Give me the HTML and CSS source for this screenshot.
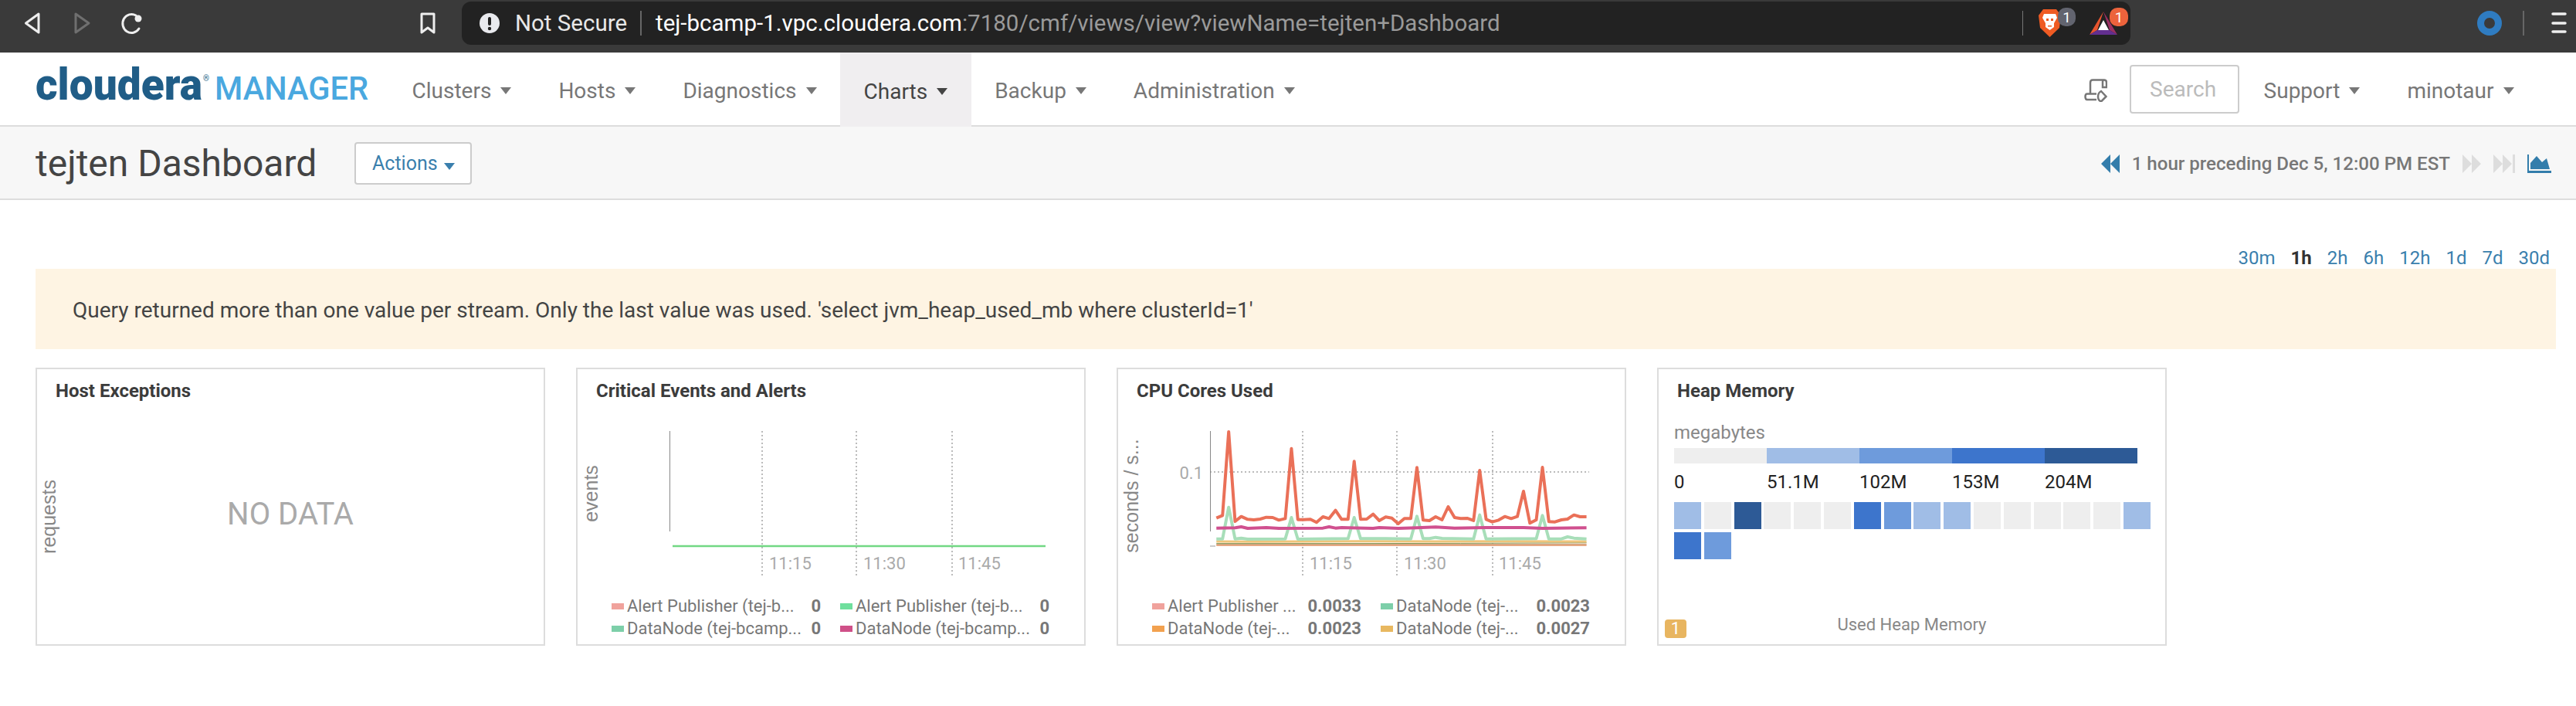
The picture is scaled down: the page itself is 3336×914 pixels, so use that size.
FILE: index.html
```html
<!DOCTYPE html>
<html lang="en">
<head>
<meta charset="utf-8">
<title>tejten Dashboard</title>
<link rel="stylesheet" href="styles.css">
</head>
<body>
<header class="browser">
  <svg class="tools" width="598" height="68" viewBox="0 0 598 68">
    <path class="tool-line" d="M50 18 L33.5 30 L50 42 Z"/>
    <path class="tool-dim" d="M98 18 L115 30 L98 42 Z"/>
    <path class="tool-line" d="M180 37 A11.5 12 0 1 1 176 20"/>
    <circle class="tool-dot" cx="179" cy="24" r="4.5"/>
    <path class="tool-line" d="M546 18 H562 V42 L554 36 L546 42 Z"/>
  </svg>
  <div class="address">
    <svg class="warn" width="26" height="26" viewBox="0 0 26 26">
      <circle class="warn-disc" cx="13" cy="13" r="13"/>
      <rect class="warn-mark" x="11" y="5" width="4" height="11" rx="2"/>
      <circle class="warn-mark" cx="13" cy="20" r="2.2"/>
    </svg>
    <span class="not-secure">Not Secure</span>
    <span class="addr-sep"></span>
    <span class="url"><span class="host">tej-bcamp-1.vpc.cloudera.com</span>:7180/cmf/views/view?viewName=tejten+Dashboard</span>
    <svg class="extensions" width="140" height="56" viewBox="2619 2 140 56">
      <rect class="sep-light" x="2618" y="14" width="2" height="32"/>
      <path class="brave" d="M2646 12 H2663 L2669 20 L2667 36 L2654.500 48 L2642 36 L2640 20 Z"/>
      <path class="brave-face" d="M2647 18 L2662 18 L2664 23 L2660 30 L2660 35 L2654.500 39 L2649 35 L2649 30 L2645 23 Z"/>
      <path class="brave" d="M2650 24 h3 v3 h-3 Z M2656 24 h3 v3 h-3 Z M2652 33 h5 v1.500 h-5 Z"/>
      <rect class="badge-gray" x="2665" y="10" width="23" height="24" rx="10"/>
      <text class="badge-num" x="2676.500" y="29">1</text>
      <path class="bat-left" d="M2724 15 L2706 45 L2716 39 Z"/>
      <path class="bat-right" d="M2724 15 L2742 45 L2732 39 Z"/>
      <path class="bat-bottom" d="M2706 45 H2742 L2732 39 H2716 Z"/>
      <path class="bat-mid" d="M2724 26 L2731 39 H2717 Z"/>
      <rect class="badge-orange" x="2732" y="10" width="24" height="24" rx="10"/>
      <text class="badge-num" x="2744" y="29">1</text>
    </svg>
  </div>
  <svg class="browser-end" width="577" height="68" viewBox="2759 0 577 68">
    <circle class="ring" cx="3224" cy="30" r="11.500"/>
    <rect class="sep-dim" x="3267" y="14" width="2" height="32"/>
    <path class="menu-bars" d="M3306 18 H3322 M3306 30 H3322 M3306 41 H3322"/>
  </svg>
</header>

<nav class="nav">
  <svg class="logo" width="503" height="94" viewBox="0 0 503 94">
    <text class="logo-cloudera" x="46" y="61" textLength="216" lengthAdjust="spacingAndGlyphs">cloudera</text>
    <text class="logo-reg" x="263" y="37">®</text>
    <text class="logo-manager" x="278" y="61" textLength="199" lengthAdjust="spacingAndGlyphs">MANAGER</text>
  </svg>
  <a class="nav-item">Clusters<i class="caret"></i></a>
  <a class="nav-item">Hosts<i class="caret"></i></a>
  <a class="nav-item">Diagnostics<i class="caret"></i></a>
  <a class="nav-item active">Charts<i class="caret"></i></a>
  <a class="nav-item">Backup<i class="caret"></i></a>
  <a class="nav-item">Administration<i class="caret"></i></a>
  <svg class="script-icon" width="30" height="30" viewBox="0 0 30 30">
    <path d="M8 19 V5 Q8 1.500 11 1.500 H26 Q29 1.500 29 5 V11 H24 V4 Q24 1.500 26 1.500"/>
    <path d="M16 19.500 H4 Q1.500 19.500 1.500 23 Q1.500 27 4 27 H16"/>
    <path d="M22 16 L28.500 23 L22 29.500 Q18 28 18 23 Q18 18 22 16 Z"/>
  </svg>
  <div class="search">Search</div>
  <a class="nav-item">Support<i class="caret"></i></a>
  <a class="nav-item last">minotaur<i class="caret"></i></a>
</nav>

<section class="subheader">
  <h1 class="page-title">tejten Dashboard</h1>
  <button class="actions">Actions<i class="caret caret-blue"></i></button>
  <div class="time-nav">
    <svg class="arrow-blue" width="24" height="24" viewBox="0 0 24 24"><path d="M12 0 V24 L0 12 Z M24 0 V24 L12 12 Z"/></svg>
    <span class="time-text">1 hour preceding Dec 5, 12:00 PM EST</span>
    <svg class="arrow-dim" width="24" height="24" viewBox="0 0 24 24"><path d="M0 0 V24 L12 12 Z M12 0 V24 L24 12 Z"/></svg>
    <svg class="arrow-dim" width="28" height="24" viewBox="0 0 28 24"><path d="M0 0 V24 L12 12 Z M12 0 V24 L24 12 Z M25 0 H28 V24 H25 Z"/></svg>
    <svg class="arrow-blue" width="31" height="24" viewBox="0 0 31 24"><path d="M0 0 H2 V21 H31 V24 H0 Z M4 19 V11 L12 2 L19 10 L25 5 L29 19 Z"/></svg>
  </div>
</section>

<main class="content">
  <div class="ranges">
    <a class="range">30m</a><a class="range current">1h</a><a class="range">2h</a><a class="range">6h</a><a class="range">12h</a><a class="range">1d</a><a class="range">7d</a><a class="range">30d</a>
  </div>
  <div class="alert">Query returned more than one value per stream. Only the last value was used. 'select jvm_heap_used_mb where clusterId=1'</div>
  <div class="panels">

    <article class="panel">
      <h2 class="panel-title">Host Exceptions</h2>
      <svg class="chart" width="656" height="250" viewBox="0 0 656 250">
        <text class="axis-name" transform="translate(24 149) rotate(-90)">requests</text>
        <text class="no-data" x="328" y="159">NO DATA</text>
      </svg>
    </article>

    <article class="panel">
      <h2 class="panel-title">Critical Events and Alerts</h2>
      <svg class="chart" width="656" height="250" viewBox="0 0 656 250">
        <text class="axis-name" transform="translate(26 119) rotate(-90)">events</text>
        <path class="grid" d="M239 38 V227 M361 38 V227 M485 38 V227"/>
        <path class="y-axis" d="M119.500 38 V168"/>
        <path class="flat" d="M123 187 H606"/>
        <text class="tick" x="248" y="217">11:15</text>
        <text class="tick" x="370" y="217">11:30</text>
        <text class="tick" x="493" y="217">11:45</text>
      </svg>
      <div class="legend">
        <div class="legend-item"><i class="swatch s-salmon"></i><span class="legend-name">Alert Publisher (tej-b...</span><b class="legend-val">0</b></div>
        <div class="legend-item"><i class="swatch s-green"></i><span class="legend-name">Alert Publisher (tej-b...</span><b class="legend-val">0</b></div>
        <div class="legend-item"><i class="swatch s-teal"></i><span class="legend-name">DataNode (tej-bcamp...</span><b class="legend-val">0</b></div>
        <div class="legend-item"><i class="swatch s-pink"></i><span class="legend-name">DataNode (tej-bcamp...</span><b class="legend-val">0</b></div>
      </div>
    </article>

    <article class="panel">
      <h2 class="panel-title">CPU Cores Used</h2>
      <svg class="chart" width="656" height="250" viewBox="0 0 656 250">
        <text class="axis-name" transform="translate(26 122) rotate(-90)">seconds / s...</text>
        <path class="grid" d="M239 38 V227 M361 38 V227 M485 38 V227 M119 91 H610"/>
        <path class="y-axis" d="M119.500 38 V168"/>
        <path class="y-axis-base" d="M119 187 H126"/>
        <text class="tick" x="248" y="217">11:15</text>
        <text class="tick" x="370" y="217">11:30</text>
        <text class="tick" x="493" y="217">11:45</text>
        <text class="tick tick-y" x="110" y="100">0.1</text>
        <g transform="translate(112 70) scale(.3317 .3333)">
          <polyline class="line l-orange" points="46,348 1491,348"/>
          <polyline class="line l-tan" points="46,344 1491,344"/>
          <polyline class="line l-olive" points="46,341 600,341 1000,340 1491,338"/>
          <polyline class="line l-yellow" points="46,333 200,334 600,332 900,333 1200,332 1491,333"/>
          <polyline class="line l-mint" points="46,323 70,323 94,200 119,323 143,320 168,324 315,323 339,240 364,324 560,322 584,240 609,322 707,322 805,323 829,235 853,322 878,322 902,317 927,321 1050,323 1074,230 1099,323 1295,322 1319,232 1344,323 1393,323 1417,315 1442,320 1491,323"/>
          <polyline class="line l-pink" points="46,281 120,280 143,276 168,282 241,279 290,282 462,281 486,276 511,281 535,279 560,280 658,282 682,279 756,282 829,280 902,277 976,281 1099,279 1245,279 1319,282 1491,280"/>
          <polyline class="line l-red" points="46,242 70,232 94,-93 119,255 143,236 168,247 192,249 217,246 241,239 266,240 290,250 315,244 339,-28 364,248 388,248 413,247 437,259 462,237 486,244 511,212 535,247 560,247 584,22 609,247 633,246 658,227 682,252 707,238 731,242 756,264 780,244 805,244 829,46 853,250 878,252 902,237 927,249 951,198 976,240 1000,244 1025,243 1050,252 1074,57 1099,247 1123,257 1148,250 1172,236 1197,244 1221,236 1245,138 1270,262 1295,249 1319,45 1344,256 1368,257 1393,249 1417,246 1442,230 1466,237 1491,237"/>
        </g>
      </svg>
      <div class="legend">
        <div class="legend-item"><i class="swatch s-salmon"></i><span class="legend-name">Alert Publisher ...</span><b class="legend-val">0.0033</b></div>
        <div class="legend-item"><i class="swatch s-teal"></i><span class="legend-name">DataNode (tej-...</span><b class="legend-val">0.0023</b></div>
        <div class="legend-item"><i class="swatch s-orange"></i><span class="legend-name">DataNode (tej-...</span><b class="legend-val">0.0023</b></div>
        <div class="legend-item"><i class="swatch s-yellow"></i><span class="legend-name">DataNode (tej-...</span><b class="legend-val">0.0027</b></div>
      </div>
    </article>

    <article class="panel panel-heap">
      <h2 class="panel-title">Heap Memory</h2>
      <div class="heap">
        <div class="heap-unit">megabytes</div>
        <div class="scale">
          <i class="c0"></i><i class="c1"></i><i class="c2"></i><i class="c3"></i><i class="c4"></i>
        </div>
        <div class="scale-labels"><span>0</span><span>51.1M</span><span>102M</span><span>153M</span><span>204M</span></div>
        <div class="cells">
          <i class="c1"></i><i class="c0"></i><i class="c4"></i><i class="c0"></i><i class="c0"></i><i class="c0"></i><i class="c3"></i><i class="c2"></i><i class="c1"></i><i class="c1"></i><i class="c0"></i><i class="c0"></i><i class="c0"></i><i class="c0"></i><i class="c0"></i><i class="c1"></i><i class="c3"></i><i class="c2"></i>
        </div>
      </div>
      <div class="heap-foot">Used Heap Memory</div>
      <span class="count-badge">1</span>
    </article>

  </div>
</main>
</body>
</html>
```
FILE: styles.css
```css
* { box-sizing: border-box; }
html, body { margin: 0; padding: 0; }
body {
  width: 3336px;
  height: 914px;
  overflow: hidden;
  background: #fff;
  font-family: Roboto, "Liberation Sans", sans-serif;
  color: #444;
}

/* Browser chrome */
.browser { display: flex; height: 68px; background: #3a3a3a; }
.tools, .browser-end, .logo { display: block; flex: none; }
.tool-line { fill: none; stroke: #eee; stroke-width: 3; stroke-linejoin: round; stroke-linecap: round; }
.tool-dim { fill: none; stroke: #6f6f6f; stroke-width: 3; stroke-linejoin: round; }
.tool-dot { fill: #eee; }
.address {
  display: flex;
  align-items: center;
  width: 2161px;
  height: 56px;
  margin-top: 2px;
  padding-left: 23px;
  background: #222;
  border-radius: 12px;
  color: #fff;
  font-size: 29.500px;
}
.warn { flex: none; }
.warn-disc { fill: #e9eaee; }
.warn-mark { fill: #222; }
.not-secure { margin-left: 20px; width: 146px; white-space: nowrap; color: #e8e8e8; }
.addr-sep { width: 2px; height: 32px; margin: 0 18px 0 16px; background: #666; }
.url { color: #9a9a9a; white-space: nowrap; }
.host { color: #fff; }
.extensions { margin-left: auto; flex: none; }
.sep-light { fill: #777; }
.sep-dim { fill: #666; }
.brave { fill: #ef5b23; }
.brave-face { fill: #fff; }
.badge-gray { fill: #62646f; }
.badge-orange { fill: #ec633c; }
.badge-num { fill: #fff; font-size: 19px; text-anchor: middle; }
.bat-left { fill: #e8552e; }
.bat-right { fill: #9c2f63; }
.bat-bottom { fill: #632f90; }
.bat-mid { fill: #fff; }
.ring { fill: none; stroke: #2f7cc1; stroke-width: 9; }
.menu-bars { fill: none; stroke: #eee; stroke-width: 3.500; stroke-linecap: round; }

/* Navigation */
.nav {
  display: flex;
  height: 96px;
  border-bottom: 2px solid #ddd;
  background: #fff;
}
.logo-cloudera { font-family: Roboto, sans-serif; font-weight: 900; font-size: 57px; fill: #205d87; }
.logo-reg { font-size: 10px; fill: #205d87; }
.logo-manager { font-size: 42px; font-weight: 500; fill: #4aa8df; }
.nav-item {
  display: flex;
  align-items: center;
  padding: 4px 30.500px 0;
  font-size: 28px;
  color: #777;
  white-space: nowrap;
}
.nav-item.active { height: 96px; background: #f0eef0; color: #444; }
.nav-item.active .caret { border-top-color: #444; }
.nav-item.last { margin-right: 50px; }
.caret {
  display: inline-block;
  width: 0;
  height: 0;
  margin-left: 12px;
  border-left: 7px solid transparent;
  border-right: 7px solid transparent;
  border-top: 9px solid #777;
}
.caret-blue { margin-left: 8px; border-top-color: #3a7fad; }
.script-icon {
  flex: none;
  align-self: center;
  margin-left: auto;
  margin-right: 29px;
  margin-top: 4px;
  fill: none;
  stroke: #777;
  stroke-width: 2.500;
}
.search {
  flex: none;
  align-self: center;
  width: 142px;
  height: 63px;
  margin-right: 1px;
  padding-left: 24px;
  border: 2px solid #ccc;
  border-radius: 4px;
  font-size: 28px;
  line-height: 59px;
  color: #bbb;
}

/* Page title row */
.subheader {
  display: flex;
  align-items: center;
  height: 95px;
  padding: 2px 32px 0 46px;
  border-bottom: 2px solid #ddd;
  background: #f7f7f7;
}
.page-title { margin: 0; font-size: 48px; font-weight: 400; color: #444; white-space: nowrap; }
.actions {
  width: 152px;
  height: 55px;
  margin-left: 49px;
  padding: 0;
  border: 2px solid #ccc;
  border-radius: 4px;
  background: #fff;
  font-family: inherit;
  font-size: 25px;
  color: #3a7fad;
}
.time-nav { display: flex; align-items: center; margin-left: auto; gap: 16px; }
.time-text { font-size: 24.100px; font-weight: 500; color: #777; white-space: nowrap; }
.arrow-blue { fill: #337dab; flex: none; }
.arrow-dim { fill: #ddd; flex: none; }

/* Dashboard */
.content { padding: 61px 26px 0 46px; }
.ranges { display: flex; justify-content: flex-end; gap: 20px; padding-right: 8px; line-height: 28px; font-size: 24px; }
.range { color: #3a7fad; }
.range.current { font-weight: 700; color: #333; }
.alert {
  height: 104px;
  padding-left: 48px;
  background: #fef4e3;
  font-size: 28px;
  line-height: 107px;
  color: #444;
}
.panels { display: flex; gap: 40px; margin-top: 24px; }
.panel {
  position: relative;
  flex: none;
  width: 660px;
  height: 360px;
  border: 2px solid #ddd;
}
.panel-title {
  margin: 0;
  padding: 15px 24px 0;
  font-size: 24px;
  line-height: 27px;
  font-weight: 700;
  color: #3c3c3c;
}
.chart { display: block; }
.axis-name { font-family: "Liberation Sans", sans-serif; font-size: 25px; fill: #888; text-anchor: middle; }
.no-data { font-size: 40px; fill: #aaa; text-anchor: middle; }
.grid { fill: none; stroke: #bbb; stroke-width: 2; stroke-dasharray: 2 3; }
.y-axis { fill: none; stroke: #888; stroke-width: 1; }
.y-axis-base { fill: none; stroke: #bbb; stroke-width: 1.500; }
.flat { fill: none; stroke: #72d884; stroke-width: 2.500; }
.tick { font-size: 22px; fill: #aaa; }
.tick-y { text-anchor: end; }
.line { fill: none; stroke-linejoin: round; }
.l-red { stroke: #ea7058; stroke-width: 12; }
.l-pink { stroke: #d0508f; stroke-width: 12; }
.l-mint { stroke: #a8deb9; stroke-width: 12; }
.l-yellow { stroke: #f0c47a; stroke-width: 9; }
.l-olive { stroke: #7c9a58; stroke-width: 3; }
.l-tan { stroke: #d5a47e; stroke-width: 5; }
.l-orange { stroke: #e58c5a; stroke-width: 5; }

.legend {
  display: grid;
  grid-template-columns: 271px 271px;
  column-gap: 25px;
  padding-left: 44px;
}
.legend-item { display: flex; align-items: center; height: 29px; font-size: 22px; color: #777; }
.swatch { flex: none; width: 16px; height: 8px; margin-right: 4px; }
.legend-name { flex: 1; white-space: nowrap; overflow: hidden; }
.legend-val { font-weight: 700; }
.s-salmon { background: #f0a29c; }
.s-green { background: #6fdf9d; }
.s-teal { background: #7dcfa9; }
.s-pink { background: #cf5088; }
.s-orange { background: #f2a14f; }
.s-yellow { background: #e8b860; }

/* Heap histogram */
.heap { padding-left: 20px; }
.heap-unit { margin-top: 26px; font-size: 24px; line-height: 28px; color: #888; }
.scale { display: flex; width: 600px; height: 20px; margin-top: 6px; }
.scale i { flex: 1; }
.scale-labels { display: grid; grid-template-columns: repeat(5, 120px); margin-top: 10px; font-size: 24px; line-height: 28px; color: #222; }
.cells { display: grid; grid-template-columns: repeat(16, 35px); grid-auto-rows: 35px; column-gap: 3.800px; row-gap: 4px; margin-top: 12px; }
.c0 { background: #eee; }
.c1 { background: #a0bde6; }
.c2 { background: #6e9bdc; }
.c3 { background: #3d75cc; }
.c4 { background: #2d5a96; }
.heap-foot { margin-top: 71px; text-align: center; font-size: 22px; line-height: 28px; color: #888; }
.count-badge {
  position: absolute;
  left: 8px;
  bottom: 8px;
  width: 28px;
  height: 24px;
  border-radius: 4px;
  background: #e8b560;
  color: #fff;
  font-size: 22px;
  line-height: 24px;
  text-align: center;
}
```
